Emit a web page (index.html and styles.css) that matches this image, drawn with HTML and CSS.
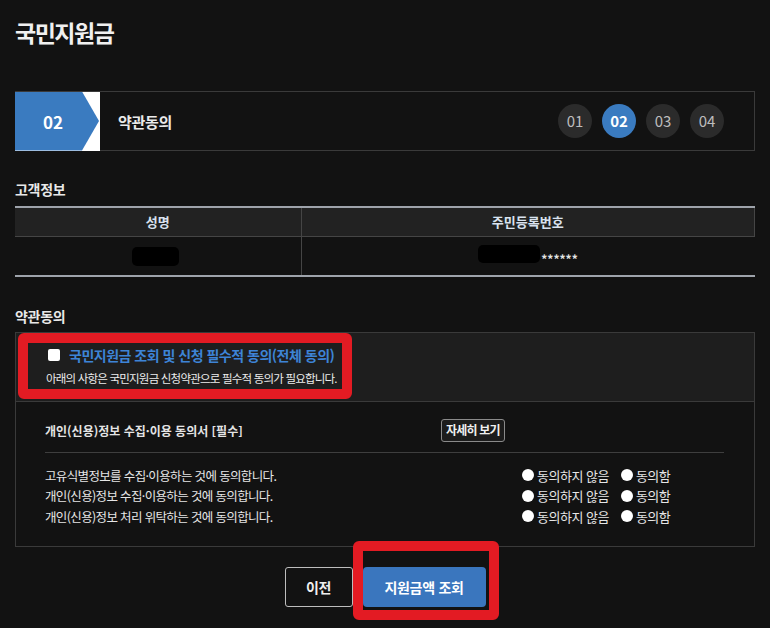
FILE: index.html
```html
<!DOCTYPE html>
<html lang="ko">
<head>
<meta charset="utf-8">
<link rel="stylesheet" href="styles.css">
</head>
<body>
<div class="page">
  <h1 class="title">국민지원금</h1>

  <div class="stepbar">
    <div class="step-current"><span>02</span></div>
    <div class="step-name">약관동의</div>
    <div class="step-dots">
      <span class="dot">01</span>
      <span class="dot active">02</span>
      <span class="dot">03</span>
      <span class="dot">04</span>
    </div>
  </div>

  <h2 class="section">고객정보</h2>
  <table class="info">
    <thead>
      <tr><th>성명</th><th>주민등록번호</th></tr>
    </thead>
    <tbody>
      <tr>
        <td><span class="redact name"></span></td>
        <td><span class="redact rrn"></span><span class="stars">******</span></td>
      </tr>
    </tbody>
  </table>

  <h2 class="section terms-title">약관동의</h2>
  <div class="consent">
    <div class="consent-all">
      <label class="all-label"><span class="checkbox"></span><span class="all-text">국민지원금 조회 및 신청 필수적 동의(전체 동의)</span></label>
      <p class="all-sub">아래의 사항은 국민지원금 신청약관으로 필수적 동의가 필요합니다.</p>
      <div class="mark mark-top"></div>
    </div>
    <div class="consent-body">
      <div class="doc-head">
        <span class="doc-title">개인(신용)정보 수집·이용 동의서 [필수]</span>
        <span class="detail-btn">자세히 보기</span>
      </div>
      <ul class="items">
        <li><span class="item-text">고유식별정보를 수집·이용하는 것에 동의합니다.</span><span class="opts"><span class="opt"><i class="radio"></i>동의하지 않음</span><span class="opt"><i class="radio"></i>동의함</span></span></li>
        <li><span class="item-text">개인(신용)정보 수집·이용하는 것에 동의합니다.</span><span class="opts"><span class="opt"><i class="radio"></i>동의하지 않음</span><span class="opt"><i class="radio"></i>동의함</span></span></li>
        <li><span class="item-text">개인(신용)정보 처리 위탁하는 것에 동의합니다.</span><span class="opts"><span class="opt"><i class="radio"></i>동의하지 않음</span><span class="opt"><i class="radio"></i>동의함</span></span></li>
      </ul>
    </div>
  </div>

  <div class="actions">
    <button class="btn prev">이전</button>
    <span class="submit-wrap">
      <button class="btn submit">지원금액 조회</button>
      <span class="mark mark-btn"></span>
    </span>
  </div>
</div>
</body>
</html>
```

FILE: styles.css
```css
* { box-sizing: border-box; }
html, body { margin: 0; padding: 0; }
body {
  background: #121212;
  color: #e6e6e6;
  font-family: "Noto Sans CJK KR", "Noto Sans", sans-serif;
  width: 770px;
  height: 628px;
  overflow: hidden;
}
.page { padding: 0 15px; }

.title {
  margin: 0;
  padding-top: 14px;
  height: 91px;
  font-size: 23px;
  line-height: 36px;
  font-weight: 700;
  letter-spacing: -1.5px;
  color: #f0f0f0;
}

.stepbar {
  display: flex;
  align-items: center;
  height: 60px;
  border: 1px solid #3a3a3a;
  border-left: none;
}
.step-current {
  width: 85px;
  height: 59px;
  background: #ffffff;
  position: relative;
}
.step-current::before {
  content: "";
  position: absolute;
  inset: 0;
  background: #3a7bc0;
  clip-path: polygon(0 0, 67px 0, 84px 50%, 67px 100%, 0 100%);
}
.step-current span {
  position: relative;
  display: block;
  width: 76px;
  text-align: center;
  line-height: 59px;
  font-size: 17px;
  font-weight: 700;
  color: #fff;
}
.step-name {
  margin-left: 18px;
  font-size: 15px;
  font-weight: 700;
  color: #eaeaea;
  flex: 1;
  letter-spacing: -0.3px;
}
.step-dots {
  display: flex;
  gap: 10px;
  margin-right: 30px;
}
.dot {
  width: 34px;
  height: 34px;
  border-radius: 50%;
  background: #2b2b2b;
  color: #bdbdbd;
  font-size: 15px;
  line-height: 34px;
  text-align: center;
}
.dot.active { background: #3a7bc0; color: #fff; font-weight: 700; }

.section {
  margin: 0;
  font-size: 14px;
  font-weight: 700;
  color: #e8e8e8;
  line-height: 20px;
  padding-top: 28px;
  padding-bottom: 7px;
  letter-spacing: -0.3px;
}

.info {
  width: 740px;
  border-collapse: collapse;
  table-layout: fixed;
  border-top: 2px solid #9ea3ab;
  border-bottom: 2px solid #9ea3ab;
}
.info th {
  height: 29px;
  background: #222222;
  font-size: 13px;
  font-weight: 700;
  color: #d9e2ef;
  border-bottom: 1px solid #454545;
  padding: 0;
}
.info th:first-child { width: 286px; border-right: 1px solid #454545; }
.info th:last-child { border-right: 1px solid #454545; }
.info td {
  height: 40px;
  text-align: center;
  padding: 0;
  font-size: 12px;
}
.info td:first-child { border-right: 1px solid #454545; }
.redact {
  display: inline-block;
  background: #000;
  border-radius: 5px;
  vertical-align: middle;
}
.redact.name { width: 47px; height: 19px; position: relative; left: -2px; }
.redact.rrn { width: 62px; height: 18px; position: relative; top: -3px; }
.stars { font-size: 12px; font-weight: 700; color: #e5e5e5; vertical-align: middle; position: relative; top: 2px; letter-spacing: 0; margin-left: 1px; }

.terms-title { padding-top: 29px; padding-bottom: 6px; }

.consent {
  border: 1px solid #3a3a3a;
}
.consent-all {
  position: relative;
  background: #1e1e1e;
  height: 69px;
  padding: 12px 0 0 30px;
  border-bottom: 1px solid #3a3a3a;
}
.all-label { display: flex; align-items: center; height: 20px; }
.checkbox {
  width: 12px;
  height: 12px;
  background: #fff;
  border-radius: 2px;
  margin-left: 2px;
}
.all-text {
  margin-left: 9px;
  font-size: 14px;
  font-weight: 700;
  color: #3d84d6;
  line-height: 20px;
  letter-spacing: -0.5px;
}
.all-sub {
  margin: 4px 0 0 0;
  font-size: 11.5px;
  line-height: 18px;
  color: #ececec;
  letter-spacing: -0.8px;
}
.mark {
  position: absolute;
  border: 10px solid #e31b23;
  border-radius: 6px;
}
.mark-top {
  left: 2px;
  top: 0;
  width: 334px;
  height: 66px;
}

.consent-body {
  padding: 17px 30px 19px 29px;
}
.doc-head {
  display: flex;
  align-items: center;
  height: 34px;
  border-bottom: 1px solid #3e3e3e;
  padding-bottom: 10px;
}
.doc-title {
  font-size: 12px;
  font-weight: 700;
  color: #e4e4e4;
  width: 396px;
  letter-spacing: 0;
}
.detail-btn {
  display: inline-block;
  height: 23px;
  line-height: 20px;
  padding: 0 4px;
  border: 1px solid #8a8a8a;
  border-radius: 3px;
  background: #1c1c1c;
  font-size: 12px;
  font-weight: 700;
  color: #f0f0f0;
  letter-spacing: -0.8px;
}
.items {
  list-style: none;
  margin: 12px 0 0 0;
  padding: 0;
}
.items li {
  display: flex;
  height: 20.5px;
  align-items: center;
  font-size: 12.5px;
  color: #e6e6e6;
}
.item-text { width: 477px; letter-spacing: -0.65px; }
.opts { display: flex; font-size: 13px; letter-spacing: -0.5px; }
.opt { display: inline-flex; align-items: center; }
.opt + .opt { margin-left: 12px; }
.radio {
  display: inline-block;
  width: 12px;
  height: 12px;
  border-radius: 50%;
  background: #fff;
  margin-right: 3px;
}

.actions {
  display: flex;
  justify-content: center;
  align-items: center;
  gap: 10px;
  padding-top: 20px;
}
.btn {
  font-family: "Noto Sans CJK KR", "Noto Sans", sans-serif;
  font-size: 14px;
  font-weight: 700;
  cursor: pointer;
  letter-spacing: -0.3px;
}
.prev {
  width: 68px;
  height: 40px;
  background: transparent;
  color: #efefef;
  border: 1px solid #bdbdbd;
  border-radius: 3px;
}
.submit-wrap { position: relative; display: inline-block; }
.submit {
  width: 123px;
  height: 40px;
  background: #3a76be;
  color: #fff;
  border: none;
  border-radius: 4px;
  display: block;
}
.mark-btn {
  left: -10px;
  top: -26px;
  width: 146px;
  height: 79px;
}
```
